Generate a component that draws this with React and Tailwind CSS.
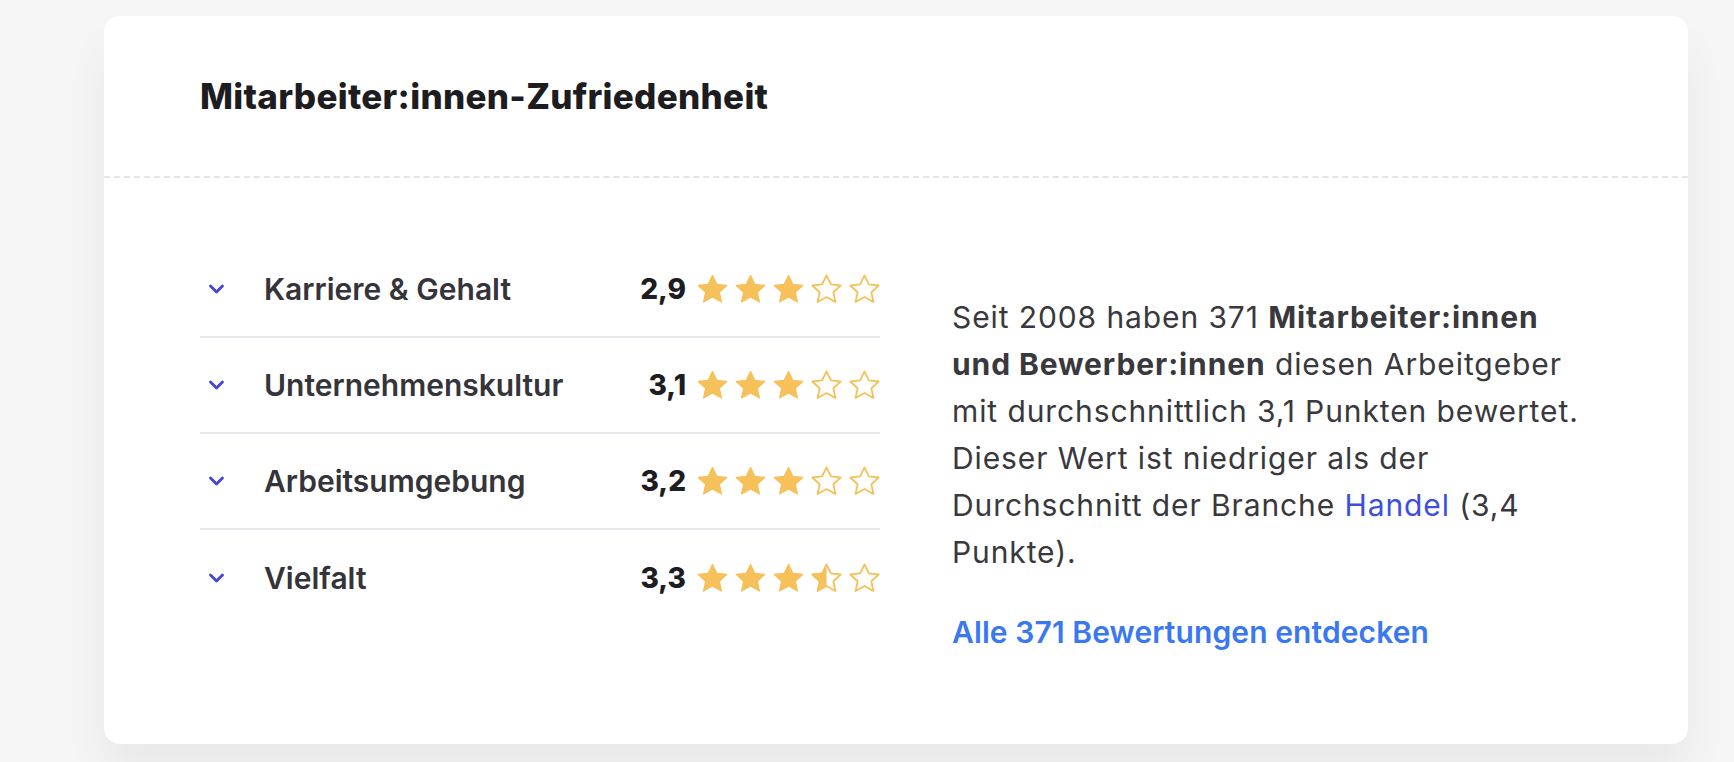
import React from "react";

const ratings = [
  { label: "Karriere & Gehalt", value: "2,9", score: 2.9 },
  { label: "Unternehmenskultur", value: "3,1", score: 3.1 },
  { label: "Arbeitsumgebung", value: "3,2", score: 3.2 },
  { label: "Vielfalt", value: "3,3", score: 3.3 },
];

const STAR = "12,1.1 15.4,8.1 23,8.9 17.3,14.1 18.9,21.7 12,17.8 5.1,21.7 6.7,14.1 1,8.9 8.6,8.1";

// fill: "full" | "half" | "empty"
const Star = ({ fill, id }) => (
  <svg viewBox="0 0 24 24" className="h-[31px] w-[31px]">
    <defs>
      <clipPath id={id}>
        <rect x="0" y="0" width="12" height="24" />
      </clipPath>
    </defs>
    {fill === "full" ? (
      <polygon points={STAR} fill="#f6c05b" stroke="#f6c05b" strokeWidth="1" strokeLinejoin="round" />
    ) : (
      <>
        <polygon points={STAR} fill="none" stroke="#f6c05b" strokeWidth="1.4" strokeLinejoin="round" />
        {fill === "half" && (
          <polygon points={STAR} fill="#f6c05b" stroke="#f6c05b" strokeWidth="1" strokeLinejoin="round" clipPath={`url(#${id})`} />
        )}
      </>
    )}
  </svg>
);

const Stars = ({ score, row }) => {
  const items = [1, 2, 3, 4, 5].map((i) => {
    const rest = score - (i - 1);
    if (rest >= 0.75) return "full";
    if (rest >= 0.25) return "half";
    return "empty";
  });
  return (
    <div className="flex items-center gap-[7px]">
      {items.map((f, i) => (
        <Star key={i} fill={f} id={`half-${row}-${i}`} />
      ))}
    </div>
  );
};

const Chevron = () => (
  <svg viewBox="0 0 16 10" className="h-[10px] w-[17px]" fill="none">
    <path d="M2 2l6 6 6-6" stroke="#3d47dc" strokeWidth="2.8" strokeLinecap="round" strokeLinejoin="round" />
  </svg>
);

export default function App() {
  return (
    <div className="min-h-screen bg-[#f5f5f5] pt-[16px] font-['Inter',sans-serif]">
      <div className="ml-[104px] h-[728px] w-[1584px] rounded-[16px] bg-white shadow-[0_30px_40px_rgba(0,0,0,0.05)]">
        <div className="flex h-[162px] items-center border-b-2 border-dashed border-[#e4e4ea] px-[96px]">
          <h2 className="text-[35px] font-extrabold tracking-[0.3px] text-[#1c1c21]">
            Mitarbeiter:innen-Zufriedenheit
          </h2>
        </div>

        <div className="flex px-[96px] pt-[64px]">
          <div className="w-[680px]">
            {ratings.map((r, idx) => (
              <div
                key={r.label}
                className={`flex h-[96px] items-center ${
                  idx < ratings.length - 1 ? "border-b-2 border-[#e6e9ee]" : ""
                }`}
              >
                <div className="flex w-[64px] justify-start pl-[8px]">
                  <Chevron />
                </div>
                <span className="flex-1 text-[30px] font-semibold text-[#34343a]">{r.label}</span>
                <span className="mr-[11px] text-[28px] font-extrabold text-[#1c1c21]">{r.value}</span>
                <Stars score={r.score} row={idx} />
              </div>
            ))}
          </div>

          <div className="ml-[72px] w-[632px] pt-[52px] text-[30px] leading-[47px] text-[#38383d]">
            <p className="tracking-[0.9px]">
              Seit 2008 haben 371 <strong className="font-bold">Mitarbeiter:innen und Bewerber:innen</strong> diesen
              Arbeitgeber mit durchschnittlich 3,1 Punkten bewertet. Dieser Wert ist niedriger als der Durchschnitt
              der Branche <a className="text-[#3d4fe0]">Handel</a> (3,4 Punkte).
            </p>
            <a className="mt-[33px] block font-semibold tracking-[0.1px] text-[#3a78f2]">Alle 371 Bewertungen entdecken</a>
          </div>
        </div>
      </div>
    </div>
  );
}
